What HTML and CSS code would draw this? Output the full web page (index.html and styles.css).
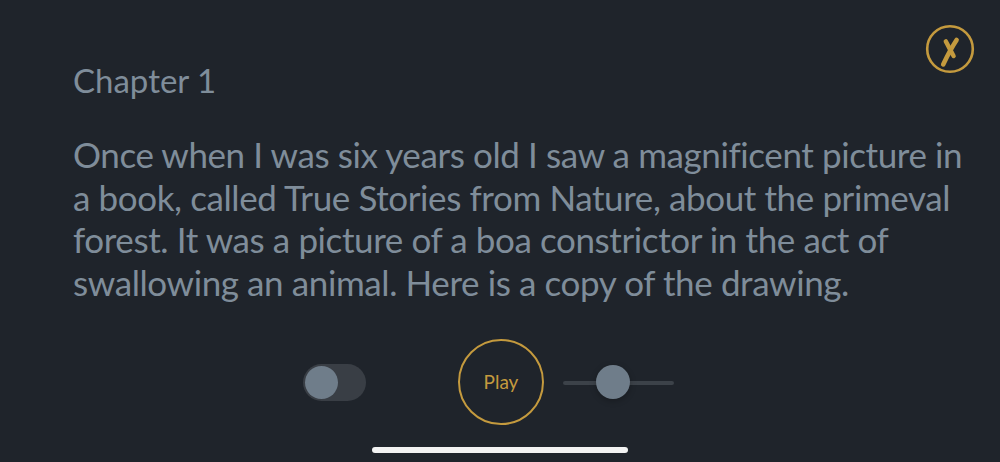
FILE: index.html
```html
<!DOCTYPE html>
<html>
<head>
<meta charset="utf-8">
<link rel="stylesheet" href="styles.css">
</head>
<body>
<div class="screen">
  <header class="top">
    <h1 class="chapter">Chapter 1</h1>
    <button class="close" aria-label="Close">
      <svg width="50" height="50" viewBox="0 0 50 50">
        <circle cx="25" cy="25" r="22.8" fill="none" stroke="#c49a3e" stroke-width="2.6"/>
        <path d="M20.8 17.4 C23.4 22 25.8 27 28.6 32" fill="none" stroke="#c49a3e" stroke-width="4.4" stroke-linecap="round"/>
        <path d="M31.6 16 C27 23 22.2 32 18.2 40.4" fill="none" stroke="#c49a3e" stroke-width="4.6" stroke-linecap="round"/>
      </svg>
    </button>
  </header>
  <p class="story">Once when I was six years old I saw a magnificent picture in a book, called True Stories from Nature, about the primeval forest. It was a picture of a boa constrictor in the act of swallowing an animal. Here is a copy of the drawing.</p>
  <div class="controls">
    <div class="toggle"><span class="toggle-knob"></span></div>
    <button class="play">Play</button>
    <div class="slider">
      <span class="slider-track"></span>
      <span class="slider-knob"></span>
    </div>
  </div>
  <div class="home-bar"></div>
</div>
</body>
</html>
```
FILE: styles.css
```css
html, body {
  margin: 0;
  padding: 0;
  background: #1f242b;
}
.screen {
  width: 1000px;
  height: 462px;
  box-sizing: border-box;
  padding: 24px 25px 0 73px;
  display: flex;
  flex-direction: column;
  font-family: Lato, "Open Sans", "Liberation Sans", sans-serif;
  color: #7f8d9a;
}
.top {
  display: flex;
  justify-content: space-between;
  align-items: flex-start;
}
.chapter {
  margin: 37px 0 0 0;
  font-size: 33px;
  font-weight: 400;
  line-height: 38px;
}
.close {
  background: none;
  border: none;
  padding: 0;
  width: 50px;
  height: 50px;
  cursor: pointer;
}
.close svg { display: block; }
.story {
  margin: 34px 0 0 0;
  width: 900px;
  font-size: 35px;
  line-height: 42.5px;
  letter-spacing: -0.4px;
}
.controls {
  display: flex;
  align-items: center;
  margin: 36px 0 0 230px;
  height: 86px;
}
.toggle {
  width: 63px;
  height: 37px;
  border-radius: 19px;
  background: #393e45;
  display: flex;
  align-items: center;
  padding: 0 2px;
  box-sizing: border-box;
}
.toggle-knob {
  width: 33px;
  height: 33px;
  border-radius: 50%;
  background: #6f7d8a;
}
.play {
  margin-left: 92px;
  width: 86px;
  height: 86px;
  border-radius: 50%;
  border: 2.5px solid #c49a3e;
  background: transparent;
  color: #c49a3e;
  font-family: Lato, "Open Sans", "Liberation Sans", sans-serif;
  font-size: 19px;
  padding: 0 0 2px 0;
}
.slider {
  margin-left: 19px;
  width: 111px;
  height: 34px;
  position: relative;
  display: flex;
  align-items: center;
}
.slider-track {
  width: 100%;
  height: 4px;
  border-radius: 2px;
  background: #3c4249;
  margin-top: 2px;
}
.slider-knob {
  position: absolute;
  left: 33px;
  top: 0;
  width: 34px;
  height: 34px;
  border-radius: 50%;
  background: #6f7d8a;
  box-shadow: 0 2px 6px rgba(0,0,0,0.25);
}
.home-bar {
  margin: auto 0 9px 299px;
  width: 256px;
  height: 6px;
  border-radius: 3px;
  background: #f2f2f2;
}
```
